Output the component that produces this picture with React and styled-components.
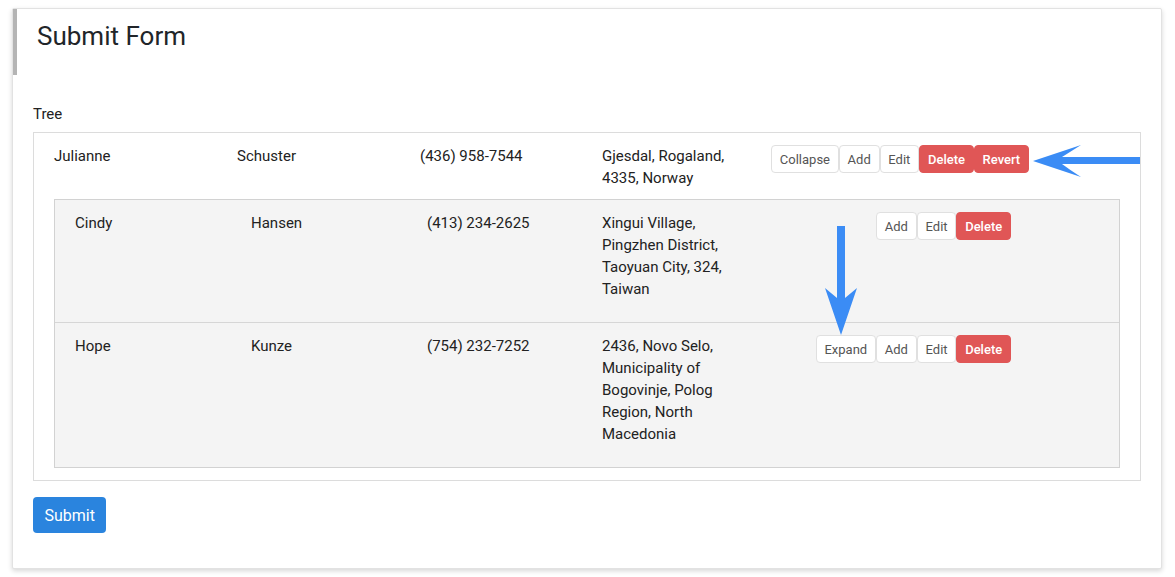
import React from 'react';
import styled, { createGlobalStyle } from 'styled-components';

const GlobalStyle = createGlobalStyle`
    body {
        margin: 0;
        background: #fff;
        font-family: Roboto, "Liberation Sans", sans-serif;
        color: #222;
    }
    * { box-sizing: border-box; }
`;

const Page = styled.div`
    position: relative;
    padding: 8px 13px 8px 12px;
`;

const Card = styled.div`
    background: #fff;
    border: 1px solid #e2e2e2;
    border-radius: 2px;
    box-shadow: 0 2px 5px rgba(0, 0, 0, 0.16);
`;

const Header = styled.div`
    border-left: 4px solid #b4b4b4;
    padding: 12px 20px 23px;
`;

const Title = styled.h1`
    margin: 0;
    font-size: 26px;
    line-height: 31px;
    font-weight: 400;
    color: #212529;
`;

const Body = styled.div`
    padding: 28px 20px 35px;
`;

const Label = styled.div`
    font-size: 15px;
    line-height: 22px;
    margin-bottom: 7px;
`;

const TreeBox = styled.div`
    border: 1px solid #dcdcdc;
    padding: 12px 20px;
`;

const Children = styled.div`
    margin-top: 10px;
    background: #f4f4f4;
    border: 1px solid #d2d2d2;
`;

const Row = styled.div`
    display: grid;
    grid-template-columns: ${(p) => p.$cols};
    align-items: start;
    font-size: 15px;
    line-height: 22px;
    padding: ${(p) => (p.$nested ? '12px 20px 22px' : '0')};
    & + & {
        border-top: 1px solid #d6d6d6;
    }
`;

const Address = styled.div`
    width: 140px;
`;

const Actions = styled.div`
    display: flex;
    justify-content: flex-end;
`;

const ActionButton = styled.button`
    height: 28px;
    padding: 0 7.8px;
    font-family: inherit;
    font-size: 13px;
    font-weight: ${(p) => (p.$danger ? 500 : 400)};
    color: ${(p) => (p.$danger ? '#fff' : '#555')};
    background: ${(p) => (p.$danger ? '#e05656' : '#fff')};
    border: 1px solid ${(p) => (p.$danger ? '#e05656' : '#e0e0e0')};
    border-radius: 4px;
    cursor: pointer;
`;

const SubmitButton = styled.button`
    margin-top: 16px;
    height: 36px;
    padding: 0 11.5px;
    font-family: inherit;
    font-size: 16px;
    color: #fff;
    background: #2a84de;
    border: none;
    border-radius: 4px;
    cursor: pointer;
`;

const Overlay = styled.svg`
    position: absolute;
    left: 0;
    top: 0;
    pointer-events: none;
`;

const OUTER_COLS = '183px 183px 182px 169px 258px';
const INNER_COLS = '176px 176px 175px 175px 234px';

const root = { first: 'Julianne', last: 'Schuster', phone: '(436) 958-7544', address: 'Gjesdal, Rogaland, 4335, Norway' };

const children = [
    { first: 'Cindy', last: 'Hansen', phone: '(413) 234-2625', address: 'Xingui Village, Pingzhen District, Taoyuan City, 324, Taiwan' },
    { first: 'Hope', last: 'Kunze', phone: '(754) 232-7252', address: '2436, Novo Selo, Municipality of Bogovinje, Polog Region, North Macedonia', expand: true },
];

function PersonRow({ person, nested, children: actions }) {
    return (
        <Row $cols={nested ? INNER_COLS : OUTER_COLS} $nested={nested}>
            <div>{person.first}</div>
            <div>{person.last}</div>
            <div>{person.phone}</div>
            <Address>{person.address}</Address>
            <Actions>{actions}</Actions>
        </Row>
    );
}

export default function App() {
    return (
        <Page>
            <GlobalStyle />
            <Card>
                <Header>
                    <Title>Submit Form</Title>
                </Header>
                <Body>
                    <Label>Tree</Label>
                    <TreeBox>
                        <PersonRow person={root}>
                            <ActionButton>Collapse</ActionButton>
                            <ActionButton>Add</ActionButton>
                            <ActionButton>Edit</ActionButton>
                            <ActionButton $danger>Delete</ActionButton>
                            <ActionButton $danger>Revert</ActionButton>
                        </PersonRow>
                        <Children>
                            {children.map((c) => (
                                <PersonRow key={c.first} person={c} nested>
                                    {c.expand && <ActionButton>Expand</ActionButton>}
                                    <ActionButton>Add</ActionButton>
                                    <ActionButton>Edit</ActionButton>
                                    <ActionButton $danger>Delete</ActionButton>
                                </PersonRow>
                            ))}
                        </Children>
                    </TreeBox>
                    <SubmitButton>Submit</SubmitButton>
                </Body>
            </Card>
            {/* annotation arrows drawn over the screenshot */}
            <Overlay width="1175" height="577" viewBox="0 0 1175 577">
                <path d="M1033 161 L1081 145 Q1070 152 1062 157 L1140 157 L1140 164 L1062 164 Q1070 170 1081 177 Z" fill="#3b8cf5" />
                <path d="M837 226 L845 226 L845 298 Q851 293 857 288 L841 335 L825 288 Q831 293 837 298 Z" fill="#3b8cf5" />
            </Overlay>
        </Page>
    );
}
